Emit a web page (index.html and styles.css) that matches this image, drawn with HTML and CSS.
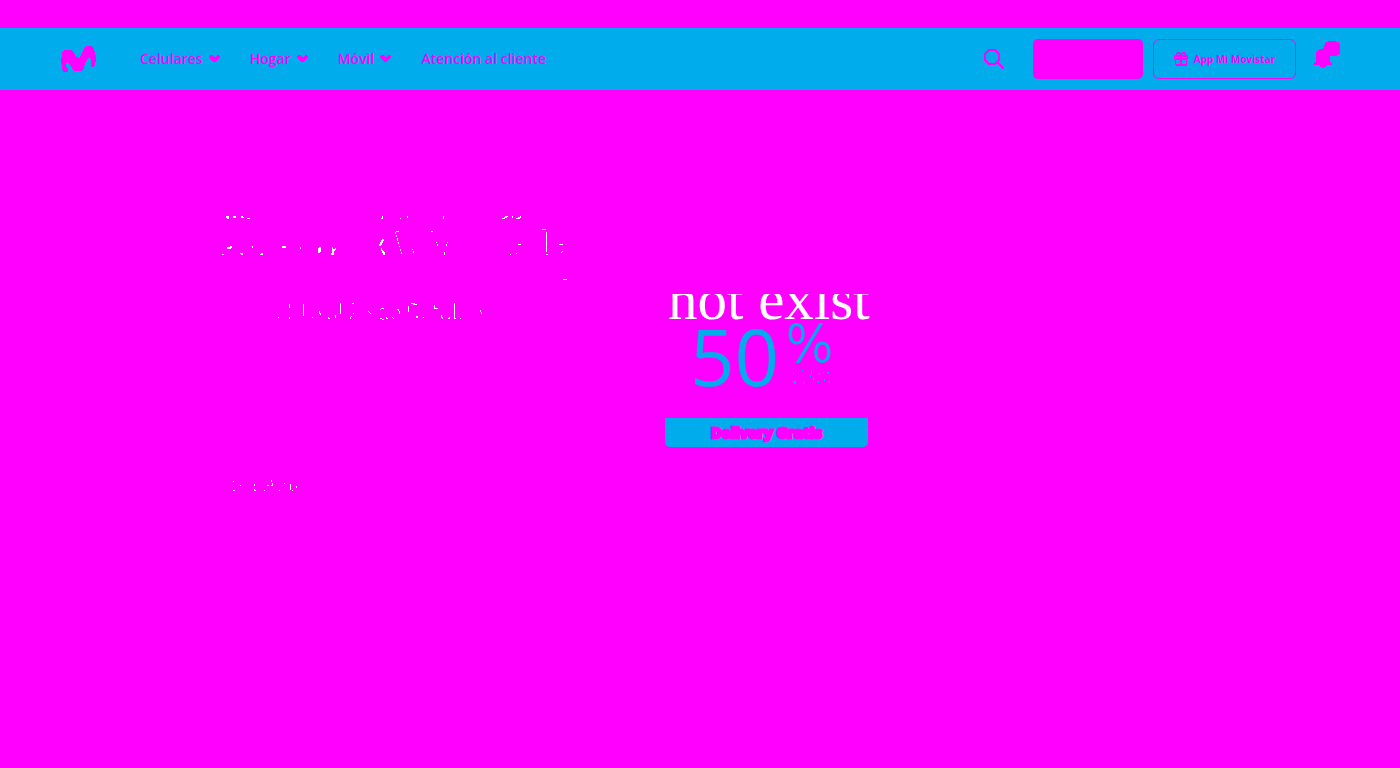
FILE: index.html
```
<!DOCTYPE html>
<html lang="es">
<head>
<meta charset="utf-8">
<title>Movistar</title>
<link rel="stylesheet" href="styles.css">
</head>
<body>
<header class="bar">
  <a class="logo" href="#" aria-label="Movistar">
    <svg viewBox="63 77 105 81" width="35" height="27"><path d="M69 155L64 132V112L67 95L73 88H92L100 95L110 111L119 112L126 99L134 82L140 78H155L162 84L166 101L168 117L165 134L160 141H152V130L155 125L150 113L142 115L135 133L130 147L122 153H107L98 147L85 126L79 127L78 139L84 146V153L80 156Z"/></svg>
  </a>
  <nav class="menu">
    <a href="#">Celulares <svg class="chev" viewBox="0 0 11 7" width="11" height="7"><path d="M1 0H4L5 2H6L8 0H10L11 2L8 5L6 7H5L0 3V1Z"/></svg></a>
    <a href="#">Hogar <svg class="chev" viewBox="0 0 11 7" width="11" height="7"><path d="M1 0H4L5 2H6L8 0H10L11 2L8 5L6 7H5L0 3V1Z"/></svg></a>
    <a href="#">Móvil <svg class="chev" viewBox="0 0 11 7" width="11" height="7"><path d="M1 0H4L5 2H6L8 0H10L11 2L8 5L6 7H5L0 3V1Z"/></svg></a>
    <a href="#">Atención al cliente</a>
  </nav>
  <div class="actions">
    <button class="icon search" type="button" aria-label="Buscar"><svg viewBox="0 0 21 21" width="21" height="21"><path class="line" d="M5 1H11L15 5V11L11 15H5L1 11V5ZM13 13L20 20"/></svg></button>
    <button class="solid" type="button" aria-label="Mi cuenta"></button>
    <button class="outline" type="button"><svg viewBox="87 95 42 42" width="14" height="14"><path fill-rule="evenodd" d="M93 105V99L98 96H103L108 101L113 96H118L123 99V105H129V117H126V134L123 137H93L90 134V117H87V108L90 105ZM97 102H102L104 105H97ZM112 102H118V105H111ZM91 109V114H105V109ZM111 109V114H125V109ZM94 119V132H105V119ZM111 119V132H122V119Z"/></svg>App Mi Movistar</button>
    <button class="icon bell" type="button" aria-label="Notificaciones"><svg viewBox="507 62 78 81" width="26" height="27"><path d="M549 63H573L576 66H582V69L585 75V98L579 104L573 107H555V123L561 130V135H546L543 139H537V143H531V139H525V135H507V130L513 123V99L516 93L524 87L537 84V75L543 67Z"/></svg></button>
  </div>
</header>
<main class="hero">
  <div class="copy">
    <svg class="specks" viewBox="0 0 1140 390" width="380" height="130" aria-hidden="true">
      <path class="fill" d="M48 33h9v9h-6v-3h-3zM69 33h9v6h-9zM93 33h6v3h3v3h-9zM111 39h9v3h-9zM516 33h3v9h-6v-3h3zM570 39h3v3h-3zM591 33h3v6h-3zM51 126h9v-3h6v6h-3v3h-12zM126 123h3v6h-3zM216 123h12v6h-12zM270 126h3v6h-3zM327 126h6v15h-3v3h-6v-15h3zM366 126h3v6h6v-3h3v6h-3v3h-3v12h-9v-6h3zM36 147h6v3h-6zM90 144h9v6h-6v-3h-3zM153 144h6v6h-9v-3h3zM516 102h6v6h-3v6h-3v6h-3v3h-6v-6h3v-6h3v-6h3zM513 129h3v6h3v3h3v3h3v9h-6v-6h-3v-6h-3z"/>
      <path class="fill" d="M558 78h9v3h-9zM555 81h3v6h-3zM558 90h3v6h-3zM561 99h3v9h-3zM564 111h3v6h-3zM567 123h3v3h-3zM570 132h3v6h-3zM573 141h3v6h-3zM606 132h3v3h-3zM609 138h3v6h-3zM663 78h6v3h-6zM699 33h3v9h-3zM678 111h3v3h-3zM681 117h3v6h-3zM711 111h3v3h-3zM708 117h3v6h-3zM702 141h3v9h-3zM882 36h3v-3h9v3h-3v3h-6v3h-9v-3h6zM906 33h3v6h-3zM930 33h3v6h-3v3h-12v-3h6v-3h6zM996 72h12v3h-12zM1008 81h3v60h-3zM1008 147h6v3h-6zM924 117h9v3h-9zM900 147h3v3h-3zM918 144h3v3h-3zM1047 117h12v3h-12zM1056 138h3v3h-3v3h-3v-3h3zM1059 222h12v3h-12z"/>
      <path class="fill" d="M237 297h3v12h-3zM279 297h3v36h-3zM204 336h3v3h-3zM237 336h3v6h-3zM306 336h3v3h-3zM327 318h3v6h3v6h-3v-3h-3zM354 336h3v3h3v3h-6zM375 330h3v9h-3zM390 294h3v33h-3zM426 294h6v3h-6zM429 324h3v3h-3zM423 333h3v3h-3v6h-3v-6h3zM474 318h3v3h-3zM477 321h3v3h-3zM480 324h3v3h-3zM513 309h9v3h-9zM510 312h3v3h-3zM510 339h6v3h6v3h-6v-3h-6zM528 336h3v3h3v3h-6zM546 336h3v3h3v3h-3v-3h-3zM561 312h6v6h3v9h-3v-9h-3v-3h-3zM594 303h3v18h-3zM600 297h3v-3h12v3h6v3h-12v-3h-9zM618 333h6v6h-6zM639 336h3v3h-3zM672 300h3v9h9v3h-12zM693 330h3v6h3v6h-3v-3h-3zM714 339h3v-3h3v6h-6zM732 294h3v45h3v3h-6zM750 339h3v3h-3zM810 315h3v6h3v6h-3v-6h-3z"/>
    </svg>
    <svg class="specks note" viewBox="0 0 300 90" width="100" height="30" aria-hidden="true"><path class="fill" d="M39 33h3v3h-3zM60 45h3v3h-3zM39 60h6v3h-6zM102 42h3v6h-3zM102 57h3v3h3v3h-6zM132 60h3v3h-3zM141 45h6v3h-6zM153 30h3v6h-3zM156 39h3v9h-6v-3h3zM177 60h3v3h-3zM192 39h3v3h-3zM210 42h3v18h-3zM216 60h3v3h-3zM228 48h3v6h-3z"/></svg>
  </div>
  <section class="promo">
    <div class="clip"><h1>not exist</h1></div>
    <div class="rate">
      <span class="number">50</span>
      <span class="unit"><span class="percent">%</span>
        <svg viewBox="415 276 120 54" width="40" height="18" aria-hidden="true"><path d="M421 278h4v3h-4zM420 291h3v9h-3zM420 318h9v9h-6v-6h-3zM447 285h3v3h-3zM450 318h3v9h-3zM474 285h3v12h-3zM472 300h3v6h-3zM480 309h3v6h-3zM495 300h3v-6h3v6h-3zM495 318h3v6h-3zM510 291h3v6h-3zM513 312h3v6h-3zM519 294h3v-3h6v6h-3v-3h-6zM528 300h3v3h-3zM525 318h6v9h-3v-6h-3z"/></svg>
      </span>
    </div>
    <p class="delivery">Delivery Gratis</p>
  </section>
</main>
</body>
</html>
```
FILE: styles.css
```
* { box-sizing: border-box; }
body {
  margin: 0;
  padding-top: 28px;
  min-height: 100vh;
  background: #ff00ff;
  color: #ff00ff;
  font-family: "Open Sans", "Noto Sans", sans-serif;
}
svg { display: block; fill: currentColor; shape-rendering: crispEdges; }
a { color: inherit; text-decoration: none; }
button {
  font: inherit;
  color: inherit;
  background: none;
  border: 0;
  padding: 0;
}
.bar {
  display: flex;
  align-items: center;
  height: 62px;
  padding: 0 60px 0 61px;
  background: #00acec;
}
.menu {
  display: flex;
  gap: 30px;
  margin-left: 44px;
  font-size: 14px;
  font-weight: 600;
  line-height: 20px;
}
.menu a { display: flex; align-items: center; gap: 6px; }
.chev { margin-top: -2px; }
.actions {
  display: flex;
  align-items: center;
  margin-left: auto;
}
.line { fill: none; stroke: currentColor; stroke-width: 2; }
.search { margin-right: 28px; }
.solid {
  width: 110px;
  height: 40px;
  margin-right: 10px;
  border-radius: 5px;
  background: #ff00ff;
}
.outline {
  display: flex;
  align-items: center;
  justify-content: center;
  gap: 6px;
  width: 143px;
  height: 40px;
  margin-right: 18px;
  border: 1px solid #ff00ff;
  border-radius: 6px;
  font-size: 10px;
  font-weight: 700;
}
.bell { padding-bottom: 10px; }
.hero {
  display: flex;
  gap: 75px;
  padding: 115px 0 0 210px;
}
.copy { flex: none; color: #fff; }
.note { margin: 135px 0 0 10px; }
.promo { width: 203px; padding-top: 89px; }
.clip {
  display: flex;
  align-items: flex-end;
  height: 28px;
  padding-left: 3px;
  overflow-y: clip;
}
h1 {
  margin: 0 0 -7px;
  color: #fff;
  font-family: "Liberation Serif", serif;
  font-size: 59px;
  font-weight: 400;
  line-height: 60px;
  white-space: nowrap;
}
.rate {
  display: flex;
  gap: 6px;
  height: 78px;
  padding-left: 25px;
  color: #00acec;
}
.number { font-size: 78px; line-height: 68px; }
.unit { padding-top: 1px; }
.unit svg { margin-left: 6px; }
.percent {
  display: block;
  font-family: "DejaVu Sans", sans-serif;
  font-weight: 200;
  font-size: 51px;
  line-height: 44px;
  -webkit-text-stroke: 1px #00acec;
}
.delivery {
  margin: 18px 0 0;
  border-radius: 0 0 5px 5px;
  background: #00acec;
  font-size: 15px;
  font-weight: 700;
  line-height: 29px;
  text-align: center;
  -webkit-text-stroke: 3px #ff00ff;
}
```
